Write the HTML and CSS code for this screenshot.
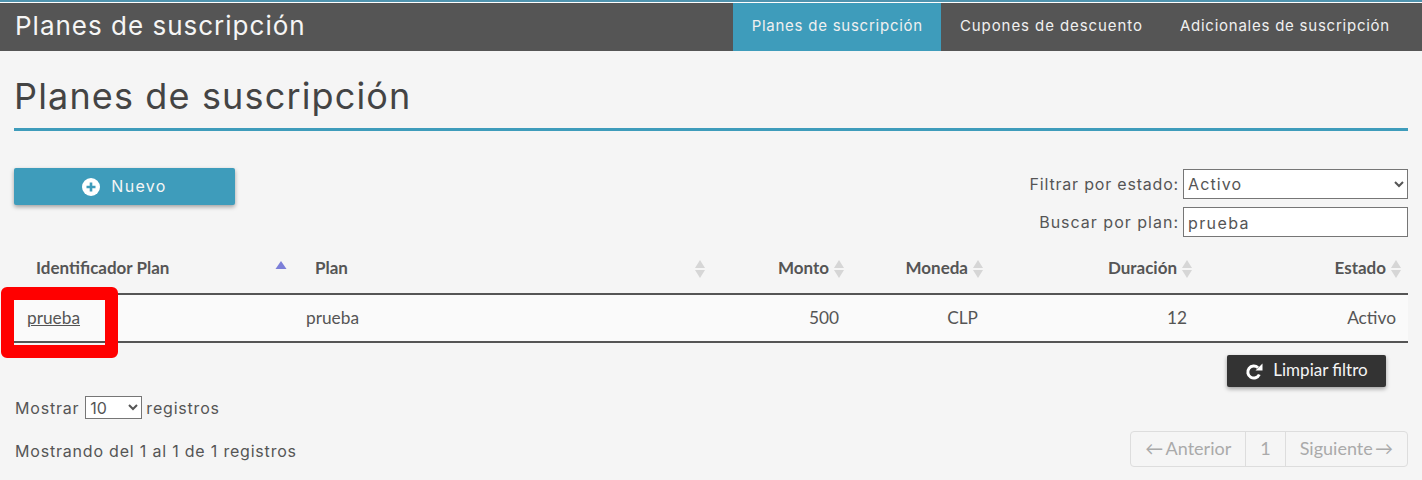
FILE: index.html
```html
<!DOCTYPE html>
<html lang="es">
<head>
<meta charset="utf-8">
<title>Planes de suscripción</title>
<link rel="stylesheet" href="styles.css">
</head>
<body>
<header class="topbar">
  <div class="brand">Planes de suscripción</div>
  <nav class="nav">
    <a class="nav-item active">Planes de suscripción</a>
    <a class="nav-item nav-coupons">Cupones de descuento</a>
    <a class="nav-item nav-extras">Adicionales de suscripción</a>
  </nav>
</header>
<main class="content">
  <h1 class="title">Planes de suscripción</h1>
  <section class="toolbar">
    <button class="btn btn-new">
      <svg class="icon" viewBox="0 0 18 18"><circle cx="9" cy="9" r="9" fill="#fff"/><path d="M9 4.500v9M4.500 9h9" stroke="#3e9cbb" stroke-width="2.600"/></svg>
      Nuevo
    </button>
    <div class="filters">
      <label class="filter">Filtrar por estado:
        <select class="field"><option>Activo</option></select>
      </label>
      <label class="filter filter-search">Buscar por plan:
        <input class="field" value="prueba">
      </label>
    </div>
  </section>
  <div class="table-wrap">
    <table class="table">
      <colgroup>
        <col class="c1"><col class="c2"><col class="c3"><col class="c3"><col class="c4"><col class="c4">
      </colgroup>
      <thead>
        <tr>
          <th class="left">Identificador Plan<svg class="sort" viewBox="0 0 12 18"><path d="M6 1l5.500 8H.500z" fill="#7c7fd8"/></svg></th>
          <th class="left">Plan<svg class="sort" viewBox="0 0 12 18"><path d="M6 0l5 8H1zM6 18l-5-8h10z" fill="#d6d6d6"/></svg></th>
          <th>Monto<svg class="sort" viewBox="0 0 12 18"><path d="M6 0l5 8H1zM6 18l-5-8h10z" fill="#d6d6d6"/></svg></th>
          <th>Moneda<svg class="sort" viewBox="0 0 12 18"><path d="M6 0l5 8H1zM6 18l-5-8h10z" fill="#d6d6d6"/></svg></th>
          <th>Duración<svg class="sort" viewBox="0 0 12 18"><path d="M6 0l5 8H1zM6 18l-5-8h10z" fill="#d6d6d6"/></svg></th>
          <th>Estado<svg class="sort" viewBox="0 0 12 18"><path d="M6 0l5 8H1zM6 18l-5-8h10z" fill="#d6d6d6"/></svg></th>
        </tr>
      </thead>
      <tbody>
        <tr>
          <td class="left"><a class="link">prueba</a></td>
          <td class="left">prueba</td>
          <td>500</td>
          <td>CLP</td>
          <td>12</td>
          <td>Activo</td>
        </tr>
      </tbody>
    </table>
    <div class="highlight"></div>
  </div>
  <div class="clear-row">
    <button class="btn btn-clear">
      <svg class="icon-refresh" viewBox="0 0 18 18"><path d="M14.300 11.500A6 6 0 1 1 13 4.800" fill="none" stroke="#fff" stroke-width="3"/><path d="M10.500 7.500h7v-7z" fill="#fff"/></svg>
      Limpiar filtro
    </button>
  </div>
  <div class="footer">
    <div class="footer-left">
      <label class="length">Mostrar
        <select class="length-select"><option>10</option></select>
        registros</label>
      <div class="info">Mostrando del 1 al 1 de 1 registros</div>
    </div>
    <div class="pager">
      <span class="page">←&#8201;Anterior</span><span class="page">1</span><span class="page">Siguiente&#8201;→</span>
    </div>
  </div>
</main>
</body>
</html>
```
FILE: styles.css
```css
* { box-sizing: border-box; }
html, body { margin: 0; height: 480px; overflow: hidden; }
body {
  background: #f5f5f5;
  color: #555;
  font-family: "Inter", "Open Sans", sans-serif;
  font-size: 16px;
  letter-spacing: .8px;
}
.topbar {
  display: flex;
  justify-content: space-between;
  height: 51px;
  background: #555;
  border-top: 3px solid #fff;
  position: relative;
}
.topbar::before {
  content: "";
  position: absolute;
  left: 0; right: 0; top: -3px;
  height: 2px;
  background: #4f93ae;
}
.brand {
  padding-left: 15px;
  color: #f5f5f5;
  font-size: 26px;
  line-height: 46px;
  font-weight: 400;
  letter-spacing: 1px;
}
.nav { display: flex; padding-right: 13.500px; }
.nav-item {
  display: block;
  padding: 0 18.500px;
  color: #f0f0f0;
  font-size: 15px;
  line-height: 46px;
  letter-spacing: .82px;
}
.nav-item.active { background: #3e9cbb; letter-spacing: .75px; }
.nav-item.nav-coupons { letter-spacing: .92px; }
.nav-item.nav-extras { letter-spacing: .76px; }
.content { padding: 0 14px; }
.title {
  margin: 0;
  height: 80px;
  padding-top: 19px;
  border-bottom: 3px solid #3e9cbb;
  color: #444;
  font-size: 36px;
  line-height: 52px;
  font-weight: 400;
  letter-spacing: 1.150px;
}
.toolbar {
  display: flex;
  justify-content: space-between;
  align-items: flex-start;
  margin-top: 38px;
}
.btn {
  display: flex;
  align-items: center;
  justify-content: center;
  border: 0;
  border-radius: 2px;
  color: #f5f5f5;
  box-shadow: 0 2px 4px rgba(0, 0, 0, .35);
}
.btn-new {
  width: 221px;
  height: 37px;
  margin-top: -1px;
  padding: 0 0 2px;
  gap: 11px;
  background: #3e9cbb;
  font: 16px "Inter", sans-serif;
  letter-spacing: 1.300px;
}
.icon { width: 18px; height: 18px; margin-top: 3px; }
.filters { display: flex; flex-direction: column; gap: 8px; }
.filter {
  display: flex;
  justify-content: flex-end;
  align-items: center;
  gap: 4px;
  font-size: 16px;
}
.filter-search { letter-spacing: 1px; }
.field {
  width: 225px;
  height: 30px;
  padding: 0 4px;
  border: 1px solid #767676;
  border-radius: 0;
  background: #fff;
  color: #555;
  font: 16px "Inter", sans-serif;
  letter-spacing: 1.100px;
}
input.field { padding-top: 2px; letter-spacing: 1.400px; }
select.field { padding: 0; }
.table-wrap { position: relative; margin-top: 13px; }
.table {
  width: 100%;
  table-layout: fixed;
  border-collapse: collapse;
  font-family: "Lato", sans-serif;
  font-size: 17.300px;
  letter-spacing: 0;
}
.c1 { width: 279px; }
.c2 { width: 419px; }
.c3 { width: 139px; }
.c4 { width: 209px; }
th {
  position: relative;
  height: 44px;
  padding: 0 22px 8px 22px;
  border-bottom: 2px solid #555;
  text-align: right;
  font-size: 17px;
  font-weight: 700;
}
td {
  height: 48px;
  padding: 0 12px 2px;
  border-bottom: 2px solid #555;
  background: #fafafa;
  text-align: right;
}
th.left, td.left { text-align: left; }
td.left { padding-left: 13px; }
.link { color: #555; text-decoration: underline; }
.sort {
  position: absolute;
  right: 6px;
  top: 10px;
  width: 12px;
  height: 18px;
}
.highlight {
  position: absolute;
  left: -13px;
  top: 37px;
  width: 117px;
  height: 71px;
  border: 13px solid #f00;
  border-radius: 6px;
}
.clear-row { display: flex; justify-content: flex-end; padding-right: 22px; margin-top: 12px; }
.btn-clear {
  width: 159px;
  height: 32px;
  padding: 0 0 3px;
  gap: 10px;
  background: #333;
  font: 17px "Lato", sans-serif;
  letter-spacing: 0;
}
.icon-refresh { width: 18px; height: 18px; margin-top: 5px; }
.footer { display: flex; justify-content: space-between; margin-top: 9px; }
.footer-left { display: flex; flex-direction: column; gap: 22px; padding-left: 1px; }
.length { display: flex; align-items: center; gap: 5px; font-size: 16px; }
.length-select {
  width: 57px;
  height: 23px;
  margin: 0 -1px 0 1px;
  border: 1px solid #767676;
  border-radius: 0;
  background: #fff;
  color: #555;
  font: 16px "Inter", sans-serif;
}
.info { font-size: 16px; }
.pager {
  display: flex;
  align-self: flex-end;
  height: 36px;
  border: 1px solid #ddd;
  border-radius: 4px;
  margin-bottom: -6px;
  color: #aaa;
  font-family: "Lato", sans-serif;
  font-size: 18px;
  letter-spacing: 0;
}
.page {
  display: flex;
  align-items: center;
  padding: 0 14px 2px;
  border-left: 1px solid #ddd;
}
.page:first-child { border-left: 0; }
```
